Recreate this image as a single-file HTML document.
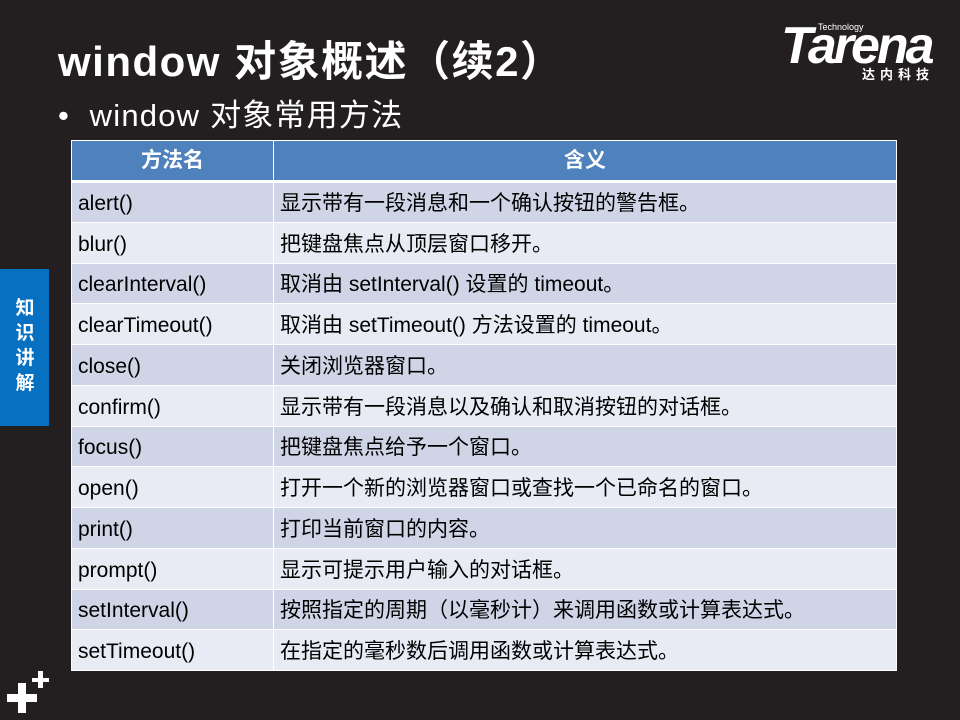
<!DOCTYPE html>
<html><head><meta charset="utf-8"><style>
body{margin:0;width:960px;height:720px;background:#231f20;position:relative;overflow:hidden;font-family:"Liberation Sans","Noto Sans CJK SC",sans-serif;}
.abs{position:absolute}
h1{position:absolute;left:58px;top:37px;margin:0;font-size:42px;font-weight:bold;color:#fff;line-height:50px;white-space:nowrap;letter-spacing:1.5px}
.sub{left:58px;top:96px;color:#fff;font-size:31px;line-height:40px;white-space:nowrap;letter-spacing:1.2px}
table{position:absolute;left:71px;top:140px;border-collapse:collapse;width:826px;table-layout:fixed}
td,th{border:1.5px solid #fff;font-size:21px;line-height:24px;color:#000;padding:4px 0 0 6px;height:36.75px;text-align:left;white-space:nowrap;vertical-align:middle;box-sizing:border-box}
th{background:#4f81bd;color:#fff;text-align:center;font-weight:bold;padding:0;height:40px;border-bottom:3px solid #fff}
tr:nth-child(even) td{background:#cfd5e6}
tr:nth-child(odd) td{background:#e8ebf4}
tr{height:40.75px}
</style></head><body>
<h1>window 对象概述（续2）</h1>
<div class="abs sub">•&nbsp;&nbsp;window 对象常用方法</div>
<div class="abs" style="left:818px;top:22px;color:#fff;font-size:9px">Technology</div>
<div class="abs" style="left:781px;top:20px;color:#fff;font-size:52px;font-weight:bold;font-style:italic;letter-spacing:-3px;line-height:52px">Tarena</div>
<div class="abs" style="left:862px;top:64px;color:#fff;font-size:13px;font-weight:bold;letter-spacing:5px">达内科技</div>
<div class="abs" style="left:0;top:269px;width:49px;height:157px;background:#0870c0"></div>
<div class="abs" style="left:13px;top:296px;width:24px;color:#fff;font-size:19px;font-weight:bold;line-height:25px;text-align:center">知识讲解</div>
<div class="abs" style="left:7px;top:694px;width:30px;height:8px;background:#fff"></div>
<div class="abs" style="left:18px;top:683px;width:8px;height:30px;background:#fff"></div>
<div class="abs" style="left:32px;top:678px;width:17px;height:4px;background:#fff"></div>
<div class="abs" style="left:38px;top:671px;width:5px;height:17px;background:#fff"></div>
<table>
<tr style="height:41px"><th style="width:202px">方法名</th><th>含义</th></tr>
<tr><td>alert()</td><td>显示带有一段消息和一个确认按钮的警告框。</td></tr>
<tr><td>blur()</td><td>把键盘焦点从顶层窗口移开。</td></tr>
<tr><td>clearInterval()</td><td>取消由 setInterval() 设置的 timeout。</td></tr>
<tr><td>clearTimeout()</td><td>取消由 setTimeout() 方法设置的 timeout。</td></tr>
<tr><td>close()</td><td>关闭浏览器窗口。</td></tr>
<tr><td>confirm()</td><td>显示带有一段消息以及确认和取消按钮的对话框。</td></tr>
<tr><td>focus()</td><td>把键盘焦点给予一个窗口。</td></tr>
<tr><td>open()</td><td>打开一个新的浏览器窗口或查找一个已命名的窗口。</td></tr>
<tr><td>print()</td><td>打印当前窗口的内容。</td></tr>
<tr><td>prompt()</td><td>显示可提示用户输入的对话框。</td></tr>
<tr><td>setInterval()</td><td>按照指定的周期（以毫秒计）来调用函数或计算表达式。</td></tr>
<tr><td>setTimeout()</td><td>在指定的毫秒数后调用函数或计算表达式。</td></tr>
</table>
</body></html>
